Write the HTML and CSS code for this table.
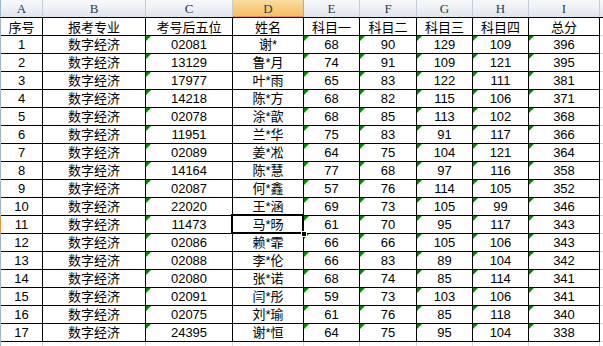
FILE: index.html
```html
<!DOCTYPE html>
<html lang="zh">
<head>
<meta charset="utf-8">
<link rel="stylesheet" href="styles.css">
</head>
<body>
<div class="sheet">
  <div class="colheads">
    <div class="ch">A</div><div class="ch">B</div><div class="ch">C</div><div class="ch active">D</div><div class="ch">E</div><div class="ch">F</div><div class="ch">G</div><div class="ch">H</div><div class="ch">I</div><div class="ch fill"></div>
  </div>
  <div class="grid">
    <div class="row head"><div class="c">序号</div><div class="c">报考专业</div><div class="c">考号后五位</div><div class="c">姓名</div><div class="c">科目一</div><div class="c">科目二</div><div class="c">科目三</div><div class="c">科目四</div><div class="c">总分</div></div>
    <div class="row"><div class="c">1</div><div class="c">数字经济</div><div class="c t">02081</div><div class="c">谢*</div><div class="c t">68</div><div class="c t">90</div><div class="c t">129</div><div class="c t">109</div><div class="c t">396</div></div>
    <div class="row"><div class="c">2</div><div class="c">数字经济</div><div class="c t">13129</div><div class="c">鲁*月</div><div class="c t">74</div><div class="c t">91</div><div class="c t">109</div><div class="c t">121</div><div class="c t">395</div></div>
    <div class="row"><div class="c">3</div><div class="c">数字经济</div><div class="c t">17977</div><div class="c">叶*雨</div><div class="c t">65</div><div class="c t">83</div><div class="c t">122</div><div class="c t">111</div><div class="c t">381</div></div>
    <div class="row"><div class="c">4</div><div class="c">数字经济</div><div class="c t">14218</div><div class="c">陈*方</div><div class="c t">68</div><div class="c t">82</div><div class="c t">115</div><div class="c t">106</div><div class="c t">371</div></div>
    <div class="row"><div class="c">5</div><div class="c">数字经济</div><div class="c t">02078</div><div class="c">涂*歆</div><div class="c t">68</div><div class="c t">85</div><div class="c t">113</div><div class="c t">102</div><div class="c t">368</div></div>
    <div class="row"><div class="c">6</div><div class="c">数字经济</div><div class="c t">11951</div><div class="c">兰*华</div><div class="c t">75</div><div class="c t">83</div><div class="c t">91</div><div class="c t">117</div><div class="c t">366</div></div>
    <div class="row"><div class="c">7</div><div class="c">数字经济</div><div class="c t">02089</div><div class="c">姜*凇</div><div class="c t">64</div><div class="c t">75</div><div class="c t">104</div><div class="c t">121</div><div class="c t">364</div></div>
    <div class="row"><div class="c">8</div><div class="c">数字经济</div><div class="c t">14164</div><div class="c">陈*慧</div><div class="c t">77</div><div class="c t">68</div><div class="c t">97</div><div class="c t">116</div><div class="c t">358</div></div>
    <div class="row"><div class="c">9</div><div class="c">数字经济</div><div class="c t">02087</div><div class="c">何*鑫</div><div class="c t">57</div><div class="c t">76</div><div class="c t">114</div><div class="c t">105</div><div class="c t">352</div></div>
    <div class="row"><div class="c">10</div><div class="c">数字经济</div><div class="c t">22020</div><div class="c">王*涵</div><div class="c t">69</div><div class="c t">73</div><div class="c t">105</div><div class="c t">99</div><div class="c t">346</div></div>
    <div class="row current"><div class="c">11</div><div class="c">数字经济</div><div class="c t">11473</div><div class="c sel">马*旸</div><div class="c t">61</div><div class="c t">70</div><div class="c t">95</div><div class="c t">117</div><div class="c t">343</div></div>
    <div class="row"><div class="c">12</div><div class="c">数字经济</div><div class="c t">02086</div><div class="c">赖*霏</div><div class="c t">66</div><div class="c t">66</div><div class="c t">105</div><div class="c t">106</div><div class="c t">343</div></div>
    <div class="row"><div class="c">13</div><div class="c">数字经济</div><div class="c t">02088</div><div class="c">李*伦</div><div class="c t">66</div><div class="c t">83</div><div class="c t">89</div><div class="c t">104</div><div class="c t">342</div></div>
    <div class="row"><div class="c">14</div><div class="c">数字经济</div><div class="c t">02080</div><div class="c">张*诺</div><div class="c t">68</div><div class="c t">74</div><div class="c t">85</div><div class="c t">114</div><div class="c t">341</div></div>
    <div class="row"><div class="c">15</div><div class="c">数字经济</div><div class="c t">02091</div><div class="c">闫*彤</div><div class="c t">59</div><div class="c t">73</div><div class="c t">103</div><div class="c t">106</div><div class="c t">341</div></div>
    <div class="row"><div class="c">16</div><div class="c">数字经济</div><div class="c t">02075</div><div class="c">刘*瑜</div><div class="c t">61</div><div class="c t">76</div><div class="c t">85</div><div class="c t">118</div><div class="c t">340</div></div>
    <div class="row"><div class="c">17</div><div class="c">数字经济</div><div class="c t">24395</div><div class="c">谢*恒</div><div class="c t">64</div><div class="c t">75</div><div class="c t">95</div><div class="c t">104</div><div class="c t">338</div></div>
    <div class="row tail"><div class="c"></div><div class="c"></div><div class="c"></div><div class="c"></div><div class="c"></div><div class="c"></div><div class="c"></div><div class="c"></div><div class="c"></div></div>
  </div>
</div>
</body>
</html>
```
FILE: styles.css
```css
html, body {
  margin: 0;
  padding: 0;
  background: #ffffff;
}

.sheet {
  width: 603px;
  height: 346px;
  overflow: hidden;
  font-family: "Liberation Sans", "Noto Sans CJK SC", sans-serif;
  font-size: 13px;
  color: #000;
}

.colheads {
  display: grid;
  grid-template-columns: 43px 103px 87px 71px 56px 57px 56px 56px 71px 1fr;
  height: 17px;
  background: linear-gradient(to bottom, #f8f9fb 0%, #eef1f5 45%, #dfe5ec 100%);
}

.ch {
  box-sizing: border-box;
  border-right: 1px solid #c3ccd7;
  text-align: center;
  font-family: "Liberation Serif", "DejaVu Serif", serif;
  font-size: 13px;
  line-height: 17px;
  color: #2e3b4a;
}

.ch:first-child {
  border-left: 1px solid #9eb6ce;
}

.ch.active {
  background: linear-gradient(to bottom, #f9dba2 0%, #f6cd80 50%, #f1c060 100%);
  border-right-color: #e6a43f;
  box-shadow: inset 0 -1px 0 #f29436;
}

.ch.fill {
  border-right: none;
}

.grid {
  border-top: 1px solid #000;
}

.row {
  display: grid;
  grid-template-columns: 42px 103px 87px 71px 56px 57px 56px 56px 71px;
  height: 18px;
  border-left: 1px solid #9eb6ce;
  background: linear-gradient(to bottom, transparent 17px, #d0d7e5 17px);
}

.row.current {
  border-left-color: #f29436;
}

.c {
  position: relative;
  box-sizing: border-box;
  height: 18px;
  border-right: 1px solid #000;
  border-bottom: 1px solid #000;
  background: #fff;
  text-align: center;
  line-height: 18px;
  white-space: nowrap;
}

.head .c {
  font-family: "Noto Sans CJK SC", sans-serif;
}

.t::before {
  content: "";
  position: absolute;
  top: 0;
  left: 0;
  border-top: 5px solid #008a00;
  border-right: 5px solid transparent;
}

.sel::after {
  content: "";
  position: absolute;
  left: -2px;
  top: -2px;
  right: -1px;
  bottom: -1px;
  border: 2px solid #000;
  z-index: 2;
}

.sel::before {
  content: "";
  position: absolute;
  right: -4px;
  bottom: -4px;
  width: 4px;
  height: 4px;
  background: #000;
  border: 1px solid #fff;
  z-index: 3;
}

.tail {
  height: 6px;
  background: none;
  border-left-color: #9eb6ce;
}

.tail .c {
  height: 6px;
  border-right-color: #d0d7e5;
  border-bottom: none;
}
```
